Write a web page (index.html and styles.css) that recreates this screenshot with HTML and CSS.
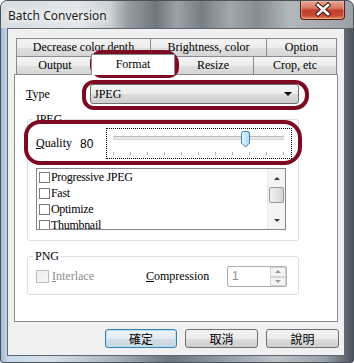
FILE: index.html
```html
<!DOCTYPE html>
<html lang="zh-Hant">
<head>
  <meta charset="UTF-8">
  <meta name="viewport" content="width=device-width, initial-scale=1.0">
  <title>Batch Conversion</title>
  <link rel="stylesheet" href="styles.css">
</head>
<body>
  <div class="window">
    <div class="titlebar">
      <span class="title">Batch Conversion</span>
      <button class="close-btn" title="Close">
        <svg width="45" height="19" viewBox="0 0 45 19">
          <path d="M18 5 L28 14 M28 5 L18 14" stroke="#3a1a14" stroke-width="4.5" stroke-linecap="square"/>
          <path d="M18 5 L28 14 M28 5 L18 14" stroke="#ffffff" stroke-width="2.6" stroke-linecap="square"/>
        </svg>
      </button>
    </div>

    <div class="client">
      <div class="tabs">
        <div class="tab-row">
          <div class="tab w-depth">Decrease color depth</div>
          <div class="tab w-bright">Brightness, color</div>
          <div class="tab w-option last">Option</div>
        </div>
        <div class="tab-row">
          <div class="tab w-output">Output</div>
          <div class="tab w-format selected">Format</div>
          <div class="tab w-resize">Resize</div>
          <div class="tab w-crop last">Crop, etc</div>
        </div>

        <div class="tab-page">
          <div class="type-row">
            <span class="field-label type-label"><u>T</u>ype</span>
            <div class="combo">
              <span>JPEG</span>
              <span class="combo-arrow"></span>
            </div>
          </div>

          <fieldset class="group jpeg-group">
            <legend>JPEG</legend>
            <div class="quality-row">
              <span class="field-label quality-label"><u>Q</u>uality</span>
              <span class="quality-value">80</span>
              <div class="slider">
                <div class="slider-track"></div>
                <svg class="slider-thumb" width="11" height="17" viewBox="0 0 11 17">
                  <defs>
                    <linearGradient id="thumbFill" x1="0" y1="0" x2="1" y2="0">
                      <stop offset="0" stop-color="#e9f6fd"/>
                      <stop offset="1" stop-color="#a9d9f4"/>
                    </linearGradient>
                  </defs>
                  <path d="M1.5 2.5 Q1.5 0.5 3.5 0.5 L7.5 0.5 Q9.5 0.5 9.5 2.5 L9.5 12 L5.5 16 L1.5 12 Z" fill="url(#thumbFill)" stroke="#3c7fb1"/>
                </svg>
                <div class="ticks">
                  <span></span><span></span><span></span><span></span><span></span><span></span>
                  <span></span><span></span><span></span><span></span><span></span>
                </div>
              </div>
            </div>

            <div class="listbox">
              <ul class="options">
                <li><span class="check"></span>Progressive JPEG</li>
                <li><span class="check"></span>Fast</li>
                <li><span class="check"></span>Optimize</li>
                <li><span class="check"></span>Thumbnail</li>
              </ul>
              <div class="scrollbar">
                <span class="sb-arrow up"></span>
                <span class="sb-thumb"></span>
                <span class="sb-arrow down"></span>
              </div>
            </div>
          </fieldset>

          <fieldset class="group png-group">
            <legend>PNG</legend>
            <div class="png-row">
              <label class="interlace">
                <span class="check disabled"></span><u>I</u>nterlace
              </label>
              <span class="field-label compression-label"><u>C</u>ompression</span>
              <div class="spin">
                <span class="spin-value">1</span>
                <div class="spin-buttons">
                  <span class="spin-btn"><i class="up"></i></span>
                  <span class="spin-btn"><i class="down"></i></span>
                </div>
              </div>
            </div>
          </fieldset>
        </div>
      </div>

      <div class="buttons">
        <button class="btn default">確定</button>
        <button class="btn">取消</button>
        <button class="btn">說明</button>
      </div>
    </div>

    <!-- hand drawn marks over the screenshot -->
    <div class="mark mark-format"></div>
    <div class="mark mark-type"></div>
    <div class="mark mark-quality"></div>
  </div>
</body>
</html>
```

FILE: styles.css
```css
html, body {
  margin: 0;
  padding: 0;
  background: #ffffff;
}
body {
  width: 354px;
  height: 363px;
  overflow: hidden;
  font-family: "Liberation Serif", "Noto Sans CJK TC", serif;
  font-size: 12px;
  color: #000;
}
u {
  text-decoration: underline;
  text-underline-offset: 1px;
}

/* window frame */
.window {
  position: relative;
  width: 354px;
  height: 363px;
  box-sizing: border-box;
  border: 1px solid #4a525a;
  border-radius: 7px 7px 3px 3px;
  overflow: hidden;
  background: linear-gradient(90deg, #9fbad4 0, #c8d9ea 2%, #d5e0ea 14%, #aab4bd 32%, #6a747e 48%, #8f98a0 62%, #bcc3c9 78%, #98a0a7 92%, #4b545c 100%);
}
.titlebar {
  height: 27px;
  display: flex;
  align-items: flex-start;
  background: linear-gradient(90deg, #d6dde3 0, #e2e6ea 22%, #ccd1d5 31%, #959ca2 36%, #6f777e 44%, #9aa1a7 50%, #767e85 57%, #a2a8ad 65%, #858c92 73%, #b3b8bc 82%, #9ba1a6 100%);
}
.title {
  margin: 7px 0 0 7px;
  font-family: "Noto Sans", "Open Sans", sans-serif;
  font-size: 12px;
  line-height: 15px;
  color: #1b1b1b;
  text-shadow: 0 0 6px #fff, 0 0 10px #fff, 0 0 12px #fff;
}
.close-btn {
  margin-left: auto;
  margin-right: 8px;
  width: 45px;
  height: 19px;
  padding: 0;
  border: 1px solid #5a1a12;
  border-top: none;
  border-radius: 0 0 4px 4px;
  background: linear-gradient(#e8a796 0, #d77662 40%, #c23d28 52%, #c74a32 80%, #e08a62 100%);
  box-shadow: inset 0 0 1px 1px rgba(255, 200, 180, 0.5);
}
.close-btn svg {
  display: block;
  margin: -1px 0 0 -1px;
}

/* client area */
.client {
  margin-left: 6px;
  width: 338px;
  height: 328px;
  box-sizing: border-box;
  border: 1px solid #5f6a75;
  background: #f0f0f0;
}
.tabs {
  padding: 9px 0 0 6px;
}
.tab-row {
  display: flex;
  height: 18px;
  margin-left: 2px;
  align-items: flex-start;
}
.tab {
  height: 18px;
  box-sizing: border-box;
  border-left: 1px solid #898c95;
  border-top: 1px solid #898c95;
  background: linear-gradient(#f4f4f4 0, #ececec 50%, #e0e0e0 51%, #d5d5d5 100%);
  text-align: center;
  line-height: 17px;
  white-space: nowrap;
}
.tab.last {
  border-right: 1px solid #898c95;
}
.w-depth { width: 134px; }
.w-bright { width: 116px; }
.w-option { width: 71px; }
.w-output { width: 77px; }
.w-format { width: 80px; }
.w-resize { width: 80px; }
.w-crop { width: 84px; }
.tab.selected {
  position: relative;
  z-index: 1;
  width: 84px;
  height: 21px;
  margin: -2px -2px 0 -2px;
  border-right: 1px solid #898c95;
  background: #ffffff;
  line-height: 19px;
}
.w-resize {
  border-left: none;
}

.tab-page {
  width: 324px;
  height: 248px;
  box-sizing: border-box;
  border: 1px solid #898c95;
  background: #ffffff;
}

/* type row */
.type-row {
  display: flex;
  align-items: center;
  height: 20px;
  margin-top: 9px;
  padding-left: 11px;
}
.type-label {
  width: 64px;
}
.combo {
  display: flex;
  align-items: center;
  width: 209px;
  height: 20px;
  box-sizing: border-box;
  padding: 0 6px 0 3px;
  border: 1px solid #707070;
  border-radius: 3px;
  background: linear-gradient(#f3f3f3 0, #ebebeb 50%, #dddddd 51%, #cfcfcf 100%);
}
.combo-arrow {
  margin-left: auto;
  width: 0;
  height: 0;
  border-left: 4px solid transparent;
  border-right: 4px solid transparent;
  border-top: 4px solid #000;
}

/* group boxes */
.group {
  width: 272px;
  margin: 0 0 0 12px;
  box-sizing: border-box;
  border: 1px solid #d5dfe5;
  border-radius: 3px;
  padding: 2px 0 10px 8px;
}
.group legend {
  padding: 0 2px;
  margin-left: -3px;
  line-height: 14px;
}
.jpeg-group {
  margin-top: 8px;
}
.png-group {
  margin-top: 8px;
  padding: 3px 0 7px 8px;
}

/* quality slider */
.quality-row {
  display: flex;
  align-items: center;
  height: 31px;
}
.quality-label {
  width: 44px;
}
.quality-value {
  width: 26px;
  font-family: "Liberation Sans", sans-serif;
  font-size: 12px;
}
.slider {
  position: relative;
  width: 186px;
  height: 31px;
  box-sizing: border-box;
  border: 1px dotted #000;
}
.slider-track {
  margin: 7px 7px 0 6px;
  height: 4px;
  box-sizing: border-box;
  border: 1px solid #d6d6d6;
  border-top-color: #b8b8b8;
  background: #e7eaea;
  border-radius: 1px;
}
.slider-thumb {
  position: absolute;
  left: 133px;
  top: 2px;
}
.ticks {
  display: flex;
  justify-content: space-between;
  margin: 12px 7px 0 6px;
  height: 3px;
}
.ticks span {
  width: 1px;
  height: 3px;
  background: #b0b0b0;
}

/* listbox */
.listbox {
  display: flex;
  width: 250px;
  height: 62px;
  margin-top: 9px;
  box-sizing: border-box;
  border: 1px solid #828790;
  background: #fff;
}
.options {
  flex: 1;
  margin: 0;
  padding: 0 0 0 2px;
  list-style: none;
  overflow: hidden;
  letter-spacing: -0.3px;
}
.options li {
  display: flex;
  align-items: center;
  height: 16px;
}
.check {
  display: inline-block;
  width: 11px;
  height: 11px;
  margin-right: 1px;
  box-sizing: border-box;
  border: 1px solid #7a7a7a;
  background: #fff;
}
.check.disabled {
  width: 13px;
  height: 13px;
  margin-right: 3px;
  border-color: #bdbdbd;
  background: linear-gradient(135deg, #ececec, #f9f9f9);
}
.scrollbar {
  display: flex;
  flex-direction: column;
  align-items: center;
  width: 17px;
  background: #f4f4f4;
  border-left: 1px solid #ececec;
}
.sb-arrow {
  width: 0;
  height: 0;
  border-left: 3px solid transparent;
  border-right: 3px solid transparent;
}
.sb-arrow.up {
  margin-top: 8px;
  border-bottom: 3px solid #3b3b3b;
}
.sb-arrow.down {
  margin-top: auto;
  margin-bottom: 7px;
  border-top: 3px solid #3b3b3b;
}
.sb-thumb {
  width: 15px;
  height: 16px;
  margin-top: 7px;
  box-sizing: border-box;
  border: 1px solid #969696;
  border-radius: 2px;
  background: linear-gradient(90deg, #f3f3f3, #e2e2e2 55%, #d6d6d6);
}

/* png row */
.png-row {
  display: flex;
  align-items: center;
  height: 21px;
}
.interlace {
  display: flex;
  align-items: center;
  width: 110px;
  color: #8d8d8d;
}
.compression-label {
  width: 81px;
}
.spin {
  display: flex;
  width: 60px;
  height: 21px;
  box-sizing: border-box;
  border: 1px solid #abadb3;
  border-radius: 2px;
  background: #fff;
}
.spin-value {
  flex: 1;
  padding-left: 4px;
  line-height: 19px;
  font-family: "Liberation Sans", sans-serif;
  color: #8d8d8d;
}
.spin-buttons {
  display: flex;
  flex-direction: column;
  width: 16px;
}
.spin-btn {
  flex: 1;
  display: flex;
  align-items: center;
  justify-content: center;
  box-sizing: border-box;
  border: 1px solid #d4d4d4;
  background: #f4f4f4;
}
.spin-btn i {
  width: 0;
  height: 0;
  border-left: 3px solid transparent;
  border-right: 3px solid transparent;
}
.spin-btn i.up {
  border-bottom: 3px solid #9a9a9a;
}
.spin-btn i.down {
  border-top: 3px solid #9a9a9a;
}

/* dialog buttons */
.buttons {
  display: flex;
  justify-content: flex-end;
  gap: 8px;
  margin-top: 7px;
  padding-right: 5px;
}
.btn {
  width: 73px;
  height: 19px;
  padding: 0;
  border: 1px solid #707070;
  border-radius: 3px;
  background: linear-gradient(#f3f3f3 0, #ebebeb 50%, #dddddd 51%, #cfcfcf 100%);
  font-family: "Noto Sans CJK TC", sans-serif;
  font-size: 12px;
  line-height: 16px;
  color: #000;
}
.btn.default {
  width: 72px;
  border-color: #3c7fb1;
  box-shadow: inset 0 0 0 1px #b3e1f9;
  background: linear-gradient(#eef4f8 0, #e3ebf1 50%, #d4dee6 51%, #c9d5de 100%);
}

/* red marker rings */
.mark {
  position: absolute;
  box-sizing: border-box;
  border: 4px solid #7c0b21;
  pointer-events: none;
}
.mark-format {
  left: 89px;
  top: 49px;
  width: 89px;
  height: 28px;
  border-radius: 12px 14px 10px 12px;
}
.mark-type {
  left: 81px;
  top: 79px;
  width: 227px;
  height: 30px;
  border-radius: 12px 14px 14px 12px;
}
.mark-quality {
  left: 23px;
  top: 119px;
  width: 278px;
  height: 45px;
  border-radius: 16px 18px 18px 16px;
}
```
